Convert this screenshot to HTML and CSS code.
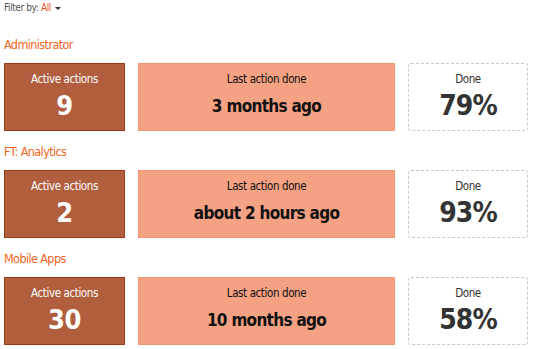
FILE: index.html
```html
<!DOCTYPE html>
<html lang="en">
<head>
    <meta charset="UTF-8">
    <title>Projects overview</title>
    <link rel="stylesheet" href="styles.css">
</head>
<body>

    <div class="filter">Filter by: <span class="filter-value">All</span> <span class="caret"></span></div>

    <div class="project">
        <h2>Administrator</h2>
        <div class="stats">
            <div class="stat active">
                <div class="label">Active actions</div>
                <div class="value">9</div>
            </div>
            <div class="stat last">
                <div class="label">Last action done</div>
                <div class="value">3 months ago</div>
            </div>
            <div class="stat done">
                <div class="label">Done</div>
                <div class="value">79%</div>
            </div>
        </div>
    </div>

    <div class="project">
        <h2>FT: Analytics</h2>
        <div class="stats">
            <div class="stat active">
                <div class="label">Active actions</div>
                <div class="value">2</div>
            </div>
            <div class="stat last">
                <div class="label">Last action done</div>
                <div class="value">about 2 hours ago</div>
            </div>
            <div class="stat done">
                <div class="label">Done</div>
                <div class="value">93%</div>
            </div>
        </div>
    </div>

    <div class="project">
        <h2>Mobile Apps</h2>
        <div class="stats">
            <div class="stat active">
                <div class="label">Active actions</div>
                <div class="value">30</div>
            </div>
            <div class="stat last">
                <div class="label">Last action done</div>
                <div class="value">10 months ago</div>
            </div>
            <div class="stat done">
                <div class="label">Done</div>
                <div class="value">58%</div>
            </div>
        </div>
    </div>

</body>
</html>
```

FILE: styles.css
```css
body {
    font-family: 'DejaVu Sans', sans-serif;
    font-stretch: condensed;
    letter-spacing: -0.4px;
    margin: 0;
    padding: 0 5px 0 4px;
    background: #fff;
    color: #333;
}

.filter {
    font-size: 10px;
    line-height: 14px;
    padding-top: 1px;
    color: #555;
}

.filter-value {
    color: #e8502a;
}

.caret {
    display: inline-block;
    width: 0;
    height: 0;
    margin-left: 2px;
    vertical-align: middle;
    border-left: 3px solid transparent;
    border-right: 3px solid transparent;
    border-top: 3px solid #333;
}

.project h2 {
    font-size: 12.5px;
    font-weight: normal;
    letter-spacing: -0.6px;
    color: #f26522;
    margin: 0;
    height: 19px;
    line-height: 19px;
    padding-top: 20px;
    padding-bottom: 9px;
}

.project + .project h2 {
    padding-top: 11px;
}

.stats {
    display: grid;
    grid-template-columns: 121px 257px 120px;
    column-gap: 13px;
}

.stat {
    box-sizing: border-box;
    height: 68px;
    text-align: center;
    padding-top: 8px;
}

.stat .label {
    font-size: 11.5px;
    line-height: 14px;
}

.stat .value {
    font-weight: bold;
    line-height: 36px;
    margin-top: 2px;
}

.active {
    background-color: #b05e3e;
    border: 1px solid #9c3b15;
    color: #fff;
}

.active .value {
    font-size: 27px;
}

.last {
    background-color: #f5a183;
    border: 1px solid #f39677;
    color: #111;
}

.last .value {
    font-size: 17px;
    letter-spacing: -0.7px;
}

.done {
    border: 1px dashed #c8c8c8;
    border-radius: 3px;
    color: #333;
}

.done .value {
    font-size: 28px;
    letter-spacing: -1px;
}
```
